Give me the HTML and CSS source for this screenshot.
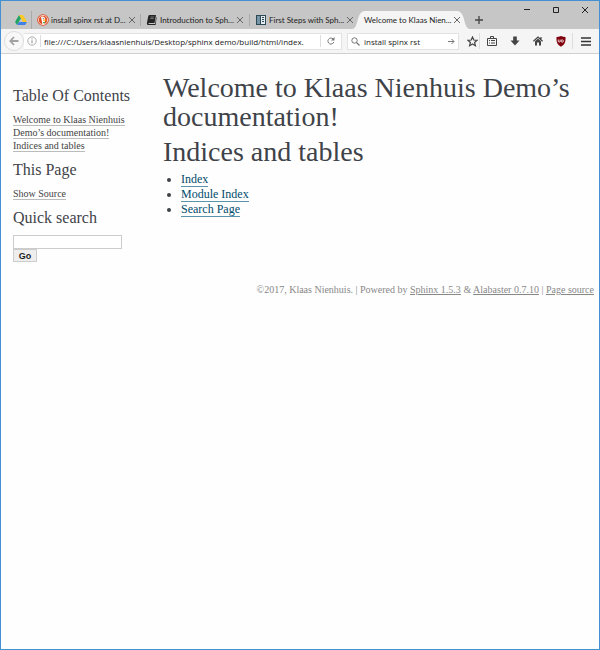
FILE: index.html
```
<!DOCTYPE html>
<html lang="en">
<head>
<meta charset="utf-8">
<meta name="viewport" content="width=device-width">
<title>Welcome to Klaas Nienhuis Demo’s documentation!</title>
<link rel="stylesheet" href="styles.css">
</head>
<body>
<div class="window">
  <header class="chrome">
    <div class="tabs">
      <button class="pinned" aria-label="Google Drive">
        <svg width="12" height="12" viewBox="0 0 12 12"><path fill="#20a464" d="M4 1 0 8l2 3 4-6.700z"/><path fill="#fbc824" d="M4 1h4l4 7H8z"/><path fill="#3f7fe8" d="M4 8h8l-2 3H2z"/></svg>
      </button>
      <div class="tab">
        <svg width="12" height="12" viewBox="0 0 12 12"><circle cx="6" cy="6" r="5.800" fill="#df4b22"/><circle cx="6" cy="6" r="4.600" fill="none" stroke="#fff" stroke-width=".7"/><path fill="#fff" d="M4 3c2-1 4 0 4 2l-.5 5.500H5.500z"/><path fill="#f9b51d" d="M6 5.500h3.200v1.200H6z"/><circle cx="6.200" cy="4.400" r=".5" fill="#345"/><path fill="#4aab44" d="M6 8h2v1.300H6z"/></svg>
        <span class="label">install spinx rst at D...</span>
        <button class="close" aria-label="Close tab"><svg width="8" height="8" viewBox="0 0 8 8"><path class="line" d="m1 1 6 6M7 1 1 7"/></svg></button>
      </div>
      <div class="tab">
        <svg width="12" height="12" viewBox="0 0 12 12"><path fill="#262626" d="M3.500 1H10l-1.500 8H3c-.8 0-.8 1 0 1h6l1.200-7 .4.500L9.600 11H2C.8 11 .8 9.500 1 8.600L2.300 2Q2.600 1 3.500 1z"/><path stroke="#aaa" stroke-width=".6" d="M4.500 3h3.500M4.200 4.500h3.500"/></svg>
        <span class="label">Introduction to Sph...</span>
        <button class="close" aria-label="Close tab"><svg width="8" height="8" viewBox="0 0 8 8"><path class="line" d="m1 1 6 6M7 1 1 7"/></svg></button>
      </div>
      <div class="tab last">
        <svg width="12" height="12" viewBox="0 0 12 12"><path fill="#2d4958" d="M1 1h10v10H1z"/><path fill="#7796a5" d="M2 2h3v8H2z"/><path fill="#e6edf0" d="M6 2h4v8H6z"/><path stroke="#2d4958" d="M7 3.500h2M7 5.500h2M7 7.500h2"/></svg>
        <span class="label">First Steps with Sph...</span>
        <button class="close" aria-label="Close tab"><svg width="8" height="8" viewBox="0 0 8 8"><path class="line" d="m1 1 6 6M7 1 1 7"/></svg></button>
      </div>
      <div class="tab active">
        <svg class="shape" viewBox="0 0 118 18" preserveAspectRatio="none"><path fill="#f5f5f5" d="M0 18C7 18 4 0 13 0h92c9 0 6 18 13 18z"/></svg>
        <span class="label">Welcome to Klaas Nien...</span>
        <button class="close" aria-label="Close tab"><svg width="8" height="8" viewBox="0 0 8 8"><path class="line" d="m1 1 6 6M7 1 1 7"/></svg></button>
      </div>
      <button class="new" aria-label="New tab"><svg width="8" height="8" viewBox="0 0 8 8"><path stroke="#444" stroke-width="1.300" d="M4 0v8M0 4h8"/></svg></button>
      <div class="controls">
        <button aria-label="Minimize"><svg width="8" height="8" viewBox="0 0 8 8"><path stroke="#222" d="M1 3.500h6"/></svg></button>
        <button aria-label="Maximize"><svg width="8" height="8" viewBox="0 0 8 8"><path fill="none" stroke="#222" d="M1.500 1.500h5v5h-5z"/></svg></button>
        <button aria-label="Close window"><svg width="8" height="8" viewBox="0 0 8 8"><path stroke="#222" d="m1 1 6 6M7 1 1 7"/></svg></button>
      </div>
    </div>
    <div class="toolbar">
      <button class="back" aria-label="Back"><svg width="10" height="10" viewBox="0 0 10 10"><path fill="none" stroke="#a2a2a2" stroke-width="1.800" d="M9.500 5H1.500M5 1 1.300 5 5 9"/></svg></button>
      <div class="address">
        <svg width="10" height="10" viewBox="0 0 10 10"><circle cx="5" cy="5" r="4.200" fill="none" stroke="#999" stroke-width=".8"/><path stroke="#888" d="M5 4.300v3M5 2.400v1"/></svg>
        <input aria-label="Address" value="file:///C:/Users/klaasnienhuis/Desktop/sphinx demo/build/html/index.">
        <button class="reload" aria-label="Reload"><svg width="8" height="8" viewBox="0 0 8 8"><path fill="none" stroke="#777" d="M6.800 5A3 3 0 1 1 6 1.900"/><path fill="#777" d="M7.500 0v3.500H4z"/></svg></button>
      </div>
      <div class="search">
        <svg width="9" height="9" viewBox="0 0 9 9"><circle cx="3.500" cy="3.500" r="2.700" fill="none" stroke="#777"/><path stroke="#777" stroke-width="1.300" d="m5.500 5.500 3 3"/></svg>
        <input aria-label="Search the web" value="install spinx rst">
        <button aria-label="Search"><svg width="7" height="7" viewBox="0 0 7 7"><path fill="none" stroke="#777" d="M0 3.500h6M3.500 1 6 3.500 3.500 6"/></svg></button>
      </div>
      <div class="actions">
        <button class="star" aria-label="Bookmark"><svg width="11" height="11" viewBox="0 0 11 11"><path fill="none" stroke="#444" stroke-width="1.200" d="m5.500 1 1.300 3 3.300.3-2.500 2.200.8 3.200-2.900-1.700-2.900 1.700.8-3.200L.9 4.300 4.200 4z"/></svg></button>
        <button aria-label="Bookmarks list"><svg width="10" height="10" viewBox="0 0 10 10"><path fill="none" stroke="#444" d="M.5 2.500h9v7h-9zM3.500 2.500v-2h3v2M2 4.500h1M4 4.500h4M2 7h1M4 7h4"/></svg></button>
        <button aria-label="Downloads"><svg width="10" height="10" viewBox="0 0 10 10"><path fill="#444" d="M3.200.5h3.600V4.500h2.700L5 9.500.5 4.500h2.700z"/></svg></button>
        <button aria-label="Home"><svg width="10" height="10" viewBox="0 0 10 10"><path fill="none" stroke="#444" stroke-width="1.200" d="M.4 5.200 5 1l4.600 4.200M8 1v2"/><path fill="#444" d="M2 5.200 5 2.600l3 2.600v4.300H6V6.500H4v3H2z"/></svg></button>
        <button aria-label="uBlock Origin"><svg width="10" height="11" viewBox="0 0 10 11"><path fill="#80000c" d="M5 0c1.500.8 3 1.100 4.500 1.100C9.700 6 9 8.600 5 10.800 1 8.600.3 6 .5 1.100 2 1.100 3.500.8 5 0z"/><path fill="none" stroke="#fff" stroke-width=".8" d="M2.300 3.500v1.700q0 .9.900.9t.9-.9V3.500"/><circle cx="6.200" cy="5" r="1.200" fill="none" stroke="#fff" stroke-width=".8"/></svg></button>
        <button class="menu" aria-label="Menu"><svg width="10" height="9" viewBox="0 0 10 9"><path stroke="#333" stroke-width="1.600" d="M0 1h10M0 4.500h10M0 8h10"/></svg></button>
      </div>
    </div>
  </header>
  <div class="page">
    <aside class="sidebar">
      <h3>Table Of Contents</h3>
      <ul>
        <li><a href="#welcome">Welcome to Klaas Nienhuis Demo’s documentation!</a></li>
        <li><a href="#indices">Indices and tables</a></li>
      </ul>
      <h3>This Page</h3>
      <ul><li><a href="#source">Show Source</a></li></ul>
      <h3><label for="q">Quick search</label></h3>
      <form>
        <input id="q" type="text">
        <button type="button">Go</button>
      </form>
    </aside>
    <main>
      <h1 id="welcome">Welcome to Klaas Nienhuis Demo’s documentation!</h1>
      <h1 id="indices">Indices and tables</h1>
      <ul>
        <li><a href="#index">Index</a></li>
        <li><a href="#modules">Module Index</a></li>
        <li><a href="#search">Search Page</a></li>
      </ul>
    </main>
  </div>
  <footer>©2017, Klaas Nienhuis. | Powered by <a href="#sphinx">Sphinx 1.5.3</a> &amp; <a href="#alabaster">Alabaster 0.7.10</a> | <a href="#source">Page source</a></footer>
</div>
</body>
</html>
```
FILE: styles.css
```
* { box-sizing: border-box; }
body { margin: 0; }
button, input { margin: 0; padding: 0; border: 0; background: none; font: inherit; color: inherit; }
button { display: flex; align-items: center; justify-content: center; flex: none; }
svg { display: block; flex: none; }
ul { margin: 0; padding: 0; }

.window {
  min-height: 100vh;
  border: 1px solid #4390d2;
  background: #fefefe;
  color: #3e4349;
  font-family: Georgia, "Liberation Serif", serif;
}

.chrome { color: #222; font-family: "Segoe UI", "Open Sans", sans-serif; font-size: 8px; }
.tabs { display: flex; align-items: flex-end; height: 28px; background: #c6c6c6; font-family: "Segoe UI", Lato, sans-serif; }
.pinned { width: 31px; height: 18px; padding-left: 10px; border-right: 1px solid #aaa; }
.tab { position: relative; display: flex; align-items: center; gap: 2px; width: 109px; height: 18px; padding: 0 6px 0 5px; }
.tab::after { content: ""; position: absolute; right: 0; top: 3px; bottom: 3px; width: 1px; background: #aaa; }
.last { width: 105px; padding-right: 3px; }
.last::after, .active::after { display: none; }
.label { flex: 1; white-space: nowrap; }
.tab .label, .tab .close { position: relative; }
.line { stroke: #666; fill: none; }
.active { width: 113px; padding: 0 8px 0 9px; }
.shape { position: absolute; left: -3px; top: 0; width: 118px; height: 18px; }
.new { width: 21px; height: 18px; }
.controls { display: flex; align-self: flex-start; margin-left: auto; }
.controls button { width: 29px; height: 18px; }

.toolbar { display: flex; align-items: center; height: 25px; padding-left: 3px; background: #f5f5f5; border-bottom: 1px solid #d0d0d0; }
.back { width: 20px; height: 20px; border: 1px solid #ddd; border-radius: 50%; background: #f8f8f8; }
.address, .search { display: flex; align-items: center; height: 17px; background: #fff; border: 1px solid #e2e2e2; }
.address { flex: 1; min-width: 0; padding-left: 3px; border-left: 0; }
.address input { flex: 1; min-width: 0; height: 12px; margin-left: 3px; padding-left: 3px; border-left: 1px solid #ddd; }
.reload { width: 21px; height: 12px; border-left: 1px solid #ddd; }
.search { width: 112px; margin-left: 5px; padding: 0 3px; gap: 4px; }
.search input { flex: 1; min-width: 0; }
.actions { display: flex; align-items: center; }
.actions button { width: 23px; height: 16px; }
.actions .star { width: 21px; padding-left: 6px; border-right: 1px solid #ddd; }
.actions .menu { width: 27px; border-left: 1px solid #ddd; }

.page { display: flex; }
.sidebar { flex: none; width: 162px; padding: 32px 20px 0 12px; font-size: 10px; line-height: 13px; }
.sidebar h3 { margin: 8px 0 7px; font-size: 16px; font-weight: 400; line-height: 20px; white-space: nowrap; }
.sidebar h3:first-child { margin-top: 0; }
.sidebar ul { list-style: none; }
.sidebar a { color: #444; text-decoration: none; border-bottom: 1px solid #bbb; }
.sidebar input { display: block; width: 109px; height: 14px; border: 1px solid #ccc; background: #fff; }
.sidebar button { width: 24px; height: 13px; border: 1px solid #ccc; background: #eee; color: #222; font: 700 9px "Liberation Sans", sans-serif; }

main { flex: 1; min-width: 0; padding: 19px 20px 0 0; font-size: 12px; line-height: 15px; }
h1 { margin: 0 0 6px; font-size: 28px; font-weight: 400; line-height: 29px; }
main ul { padding-left: 18px; }
main a { color: #004b6b; text-decoration: none; border-bottom: 1px solid #5b93aa; }

footer { margin-top: 22px; padding-right: 5px; color: #888; font-size: 10px; line-height: 12px; text-align: right; }
footer a { color: #888; }
```
